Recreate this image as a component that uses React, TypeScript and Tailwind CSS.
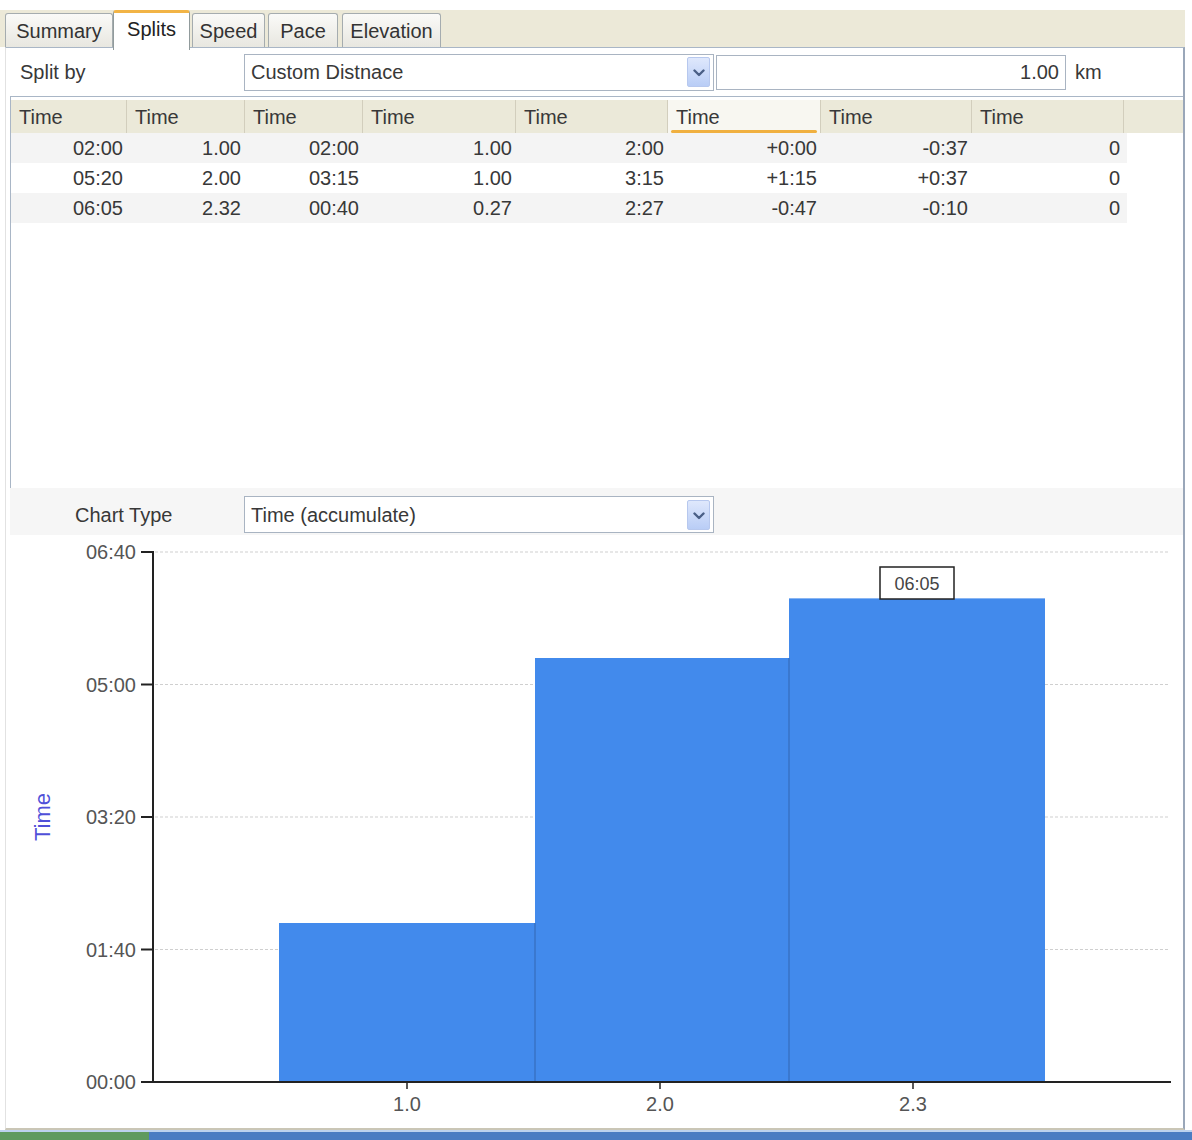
import React from 'react';

const FONT = "'Liberation Sans', Arial, sans-serif";

const tabs = [
  { label: 'Summary', w: 'w-[108px]', ml: 'ml-0' },
  { label: 'Splits', w: 'w-[77px]', ml: 'ml-0', active: true },
  { label: 'Speed', w: 'w-[73px]', ml: 'ml-[2px]' },
  { label: 'Pace', w: 'w-[70px]', ml: 'ml-[3px]' },
  { label: 'Elevation', w: 'w-[99px]', ml: 'ml-[4px]' },
];

const colWidths = ['w-[116px]', 'w-[118px]', 'w-[118px]', 'w-[153px]', 'w-[152px]', 'w-[153px]', 'w-[151px]', 'w-[152px]'];

const rows = [
  ['02:00', '1.00', '02:00', '1.00', '2:00', '+0:00', '-0:37', '0'],
  ['05:20', '2.00', '03:15', '1.00', '3:15', '+1:15', '+0:37', '0'],
  ['06:05', '2.32', '00:40', '0.27', '2:27', '-0:47', '-0:10', '0'],
];

function Chevron() {
  return (
    <svg width="12" height="8" viewBox="0 0 12 8" className="mt-[2px]">
      <path d="M1.5 1.5 L6 6 L10.5 1.5" stroke="#4a5f86" strokeWidth="2.4" fill="none" strokeLinecap="round" strokeLinejoin="round" />
    </svg>
  );
}

function Select({ value }: { value: string }) {
  return (
    <div className="w-[470px] h-[37px] border border-[#a9b4c2] bg-white flex items-center pl-[6px] pr-[3px]">
      <span className="flex-1 text-[20px] text-[#383838]">{value}</span>
      <div className="w-[23px] h-[30px] rounded-[2px] bg-linear-to-b from-[#dfe8fc] to-[#b9cdf6] border border-[#b7c8ee] flex items-center justify-center">
        <Chevron />
      </div>
    </div>
  );
}

// time axis: 00:00 at y=1082, 06:40 (400s) at y=552
const yOf = (s: number) => 1082 - s * 1.325;
const yTicks = [
  { s: 0, label: '00:00' },
  { s: 100, label: '01:40' },
  { s: 200, label: '03:20' },
  { s: 300, label: '05:00' },
  { s: 400, label: '06:40' },
];
const bars = [
  { x: 279, w: 256, s: 120 },
  { x: 535, w: 254, s: 320 },
  { x: 789, w: 256, s: 365 },
];
const xTicks = [
  { x: 407, label: '1.0' },
  { x: 660, label: '2.0' },
  { x: 913, label: '2.3' },
];

function Chart() {
  return (
    <svg width="1177" height="593" viewBox="6 535 1177 593" className="block" fontFamily={FONT}>
      {yTicks.slice(1).map(t => (
        <line key={t.s} x1={155} x2={1170} y1={yOf(t.s)} y2={yOf(t.s)} stroke="#cfcfcf" strokeWidth="1" strokeDasharray="3 2" />
      ))}
      {bars.map((b, i) => (
        <rect key={i} x={b.x} y={yOf(b.s)} width={b.w} height={1082 - yOf(b.s)} fill="#428aec" />
      ))}
      <line x1={535} x2={535} y1={yOf(120)} y2={1082} stroke="#3a78cf" strokeWidth="2" />
      <line x1={789} x2={789} y1={yOf(320)} y2={1082} stroke="#3a78cf" strokeWidth="2" />
      <line x1={153} x2={153} y1={551} y2={1083} stroke="#222" strokeWidth="2" />
      <line x1={152} x2={1171} y1={1082} y2={1082} stroke="#222" strokeWidth="2" />
      {yTicks.map(t => (
        <g key={t.s}>
          <line x1={141} x2={153} y1={yOf(t.s)} y2={yOf(t.s)} stroke="#222" strokeWidth="2" />
          <text x={136} y={yOf(t.s) + 7} textAnchor="end" fontSize="20" fill="#555">{t.label}</text>
        </g>
      ))}
      {xTicks.map(t => (
        <g key={t.x}>
          <line x1={t.x} x2={t.x} y1={1082} y2={1089} stroke="#222" strokeWidth="1.5" />
          <text x={t.x} y={1111} textAnchor="middle" fontSize="20" fill="#555">{t.label}</text>
        </g>
      ))}
      <rect x={880} y={567} width={74} height={32} fill="#fff" stroke="#222" strokeWidth="1.5" />
      <text x={917} y={590} textAnchor="middle" fontSize="18" fill="#444">06:05</text>
      <text x={50} y={817} transform="rotate(-90 50 817)" textAnchor="middle" fontSize="22" fill="#5050d8">Time</text>
    </svg>
  );
}

export default function App() {
  return (
    <div className="w-[1192px] h-[1140px] bg-white text-[#383838] flex flex-col overflow-hidden font-['Liberation_Sans',Arial,sans-serif]">
      <div className="h-[10px] shrink-0" />

      {/* tab strip */}
      <div className="h-[37px] shrink-0 bg-[#ece9d8] mr-[7px] flex items-end pl-[5px] relative z-10">
        {tabs.map(t =>
          t.active ? (
            <div
              key={t.label}
              className={`${t.w} ${t.ml} h-[40px] -mb-[3px] bg-white border-x border-[#919b9c] border-t-[3px] border-t-[#f2b446] rounded-t-[3px] flex justify-center pt-[1px] text-[20px] text-[#222]`}
            >
              {t.label}
            </div>
          ) : (
            <div
              key={t.label}
              className={`${t.w} ${t.ml} h-[34px] bg-linear-to-b from-[#fafaf8] to-[#e8e7e0] border border-b-0 border-[#a5acaf] rounded-t-[3px] flex items-center justify-center text-[20px] text-[#333]`}
            >
              {t.label}
            </div>
          )
        )}
      </div>

      {/* panel */}
      <div className="flex-1 ml-[5px] mr-[7px] border-l border-l-[#e2e2e2] border-r-2 border-r-[#9aa7b9] border-b-2 border-b-[#cac6b6] border-t border-t-[#a9b6c6] flex flex-col">
        {/* split by row */}
        <div className="h-[48px] shrink-0 flex items-center">
          <div className="w-[238px] pl-[14px] text-[20px]">Split by</div>
          <Select value="Custom Distnace" />
          <div className="ml-[2px] w-[350px] h-[35px] border border-[#a9b4c2] flex items-center justify-end pr-[6px] text-[20px]">
            1.00
          </div>
          <span className="ml-[9px] text-[20px]">km</span>
        </div>

        {/* table */}
        <div className="h-[392px] shrink-0 ml-[4px] border-l border-t border-[#a9b6c6] pt-[3px]">
          <div className="flex h-[33px] bg-[#ebe9d9]">
            {colWidths.map((w, i) => (
              <div
                key={i}
                className={`${w} relative flex items-center pl-[8px] text-[20px] border-r border-r-[#d2cebd] ${i === 5 ? 'bg-[#f8f7f1]' : ''}`}
              >
                Time
                {i === 5 && <div className="absolute left-[3px] right-[3px] bottom-0 h-[3px] rounded-full bg-[#f0b040]" />}
              </div>
            ))}
            <div className="flex-1" />
          </div>
          {rows.map((r, ri) => (
            <div key={ri} className={`flex h-[30px] w-[1116px] items-center ${ri % 2 === 0 ? 'bg-[#f4f4f4]' : 'bg-white'}`}>
              {r.map((v, ci) => (
                <div key={ci} className={`${colWidths[ci]} text-right pr-[4px] text-[20px]`}>
                  {v}
                </div>
              ))}
            </div>
          ))}
        </div>

        {/* chart type row */}
        <div className="h-[47px] shrink-0 ml-[4px] bg-[#f6f6f6] flex items-end pb-[2px]">
          <div className="w-[234px] h-[37px] flex items-center pl-[65px] text-[20px]">Chart Type</div>
          <Select value="Time (accumulate)" />
        </div>

        {/* chart */}
        <div className="flex-1 bg-white">
          <Chart />
        </div>
      </div>

      {/* bottom strip */}
      <div className="h-[10px] shrink-0 border-t-2 border-t-[#bcd2ee] flex">
        <div className="w-[149px] bg-[#5e9a5e]" />
        <div className="flex-1 bg-[#4a7cc2]" />
      </div>
    </div>
  );
}
